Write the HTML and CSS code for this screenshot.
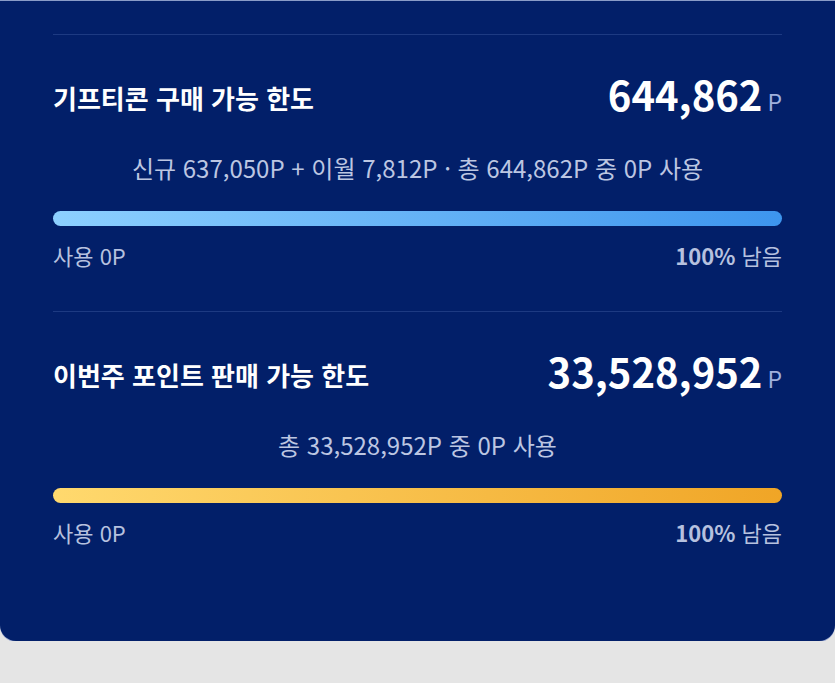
FILE: index.html
```html
<!DOCTYPE html>
<html lang="ko">
<head>
  <meta charset="UTF-8">
  <meta name="viewport" content="width=device-width, initial-scale=1.0">
  <link rel="stylesheet" href="styles.css">
</head>
<body>
  <div class="card">
    <hr class="line">
    <div class="limit">
      <div class="head">
        <span class="title">기프티콘 구매 가능 한도</span>
        <span class="amount">644,862<small>P</small></span>
      </div>
      <p class="desc">신규 637,050P + 이월 7,812P · 총 644,862P 중 0P 사용</p>
      <div class="bar blue"></div>
      <div class="foot">
        <span>사용 0P</span>
        <span><b>100%</b> 남음</span>
      </div>
    </div>
    <hr class="line">
    <div class="limit">
      <div class="head">
        <span class="title">이번주 포인트 판매 가능 한도</span>
        <span class="amount">33,528,952<small>P</small></span>
      </div>
      <p class="desc">총 33,528,952P 중 0P 사용</p>
      <div class="bar yellow"></div>
      <div class="foot">
        <span>사용 0P</span>
        <span><b>100%</b> 남음</span>
      </div>
    </div>
  </div>
</body>
</html>
```

FILE: styles.css
```css
body {
  margin: 0;
  background: #e5e5e5;
  font-family: "Noto Sans CJK KR", "Noto Sans", sans-serif;
}

.card {
  background: #021f69;
  border-top: 1px solid #8a9cc8;
  border-radius: 0 0 16px 16px;
  box-shadow: 0 1px 0 #9aa8d0;
  padding: 33px 53px 53px;
  color: #fff;
}

.line {
  margin: 0;
  border: 0;
  height: 1px;
  background: #1d3a82;
}

.limit {
  padding: 38px 0 41px;
}

.head {
  display: flex;
  justify-content: space-between;
  align-items: center;
  height: 48px;
}

.title {
  font-size: 26px;
  font-weight: 700;
}

.amount {
  font-size: 40px;
  font-weight: 700;
  line-height: 48px;
}

.amount small {
  font-size: 23px;
  font-weight: 400;
  color: #9fb0dc;
  margin-left: 5px;
}

.desc {
  margin: 30px 0 0;
  text-align: center;
  font-size: 24px;
  line-height: 34px;
  color: #bcc6e2;
}

.bar {
  height: 15px;
  border-radius: 8px;
  margin-top: 26px;
}

.blue {
  background: linear-gradient(90deg, #8dd0ff, #3d95ee);
}

.yellow {
  background: linear-gradient(90deg, #ffd96e, #f0a526);
}

.foot {
  display: flex;
  justify-content: space-between;
  margin-top: 14px;
  font-size: 22px;
  line-height: 30px;
  color: #b6c1df;
}

.foot b {
  font-weight: 700;
}
```
